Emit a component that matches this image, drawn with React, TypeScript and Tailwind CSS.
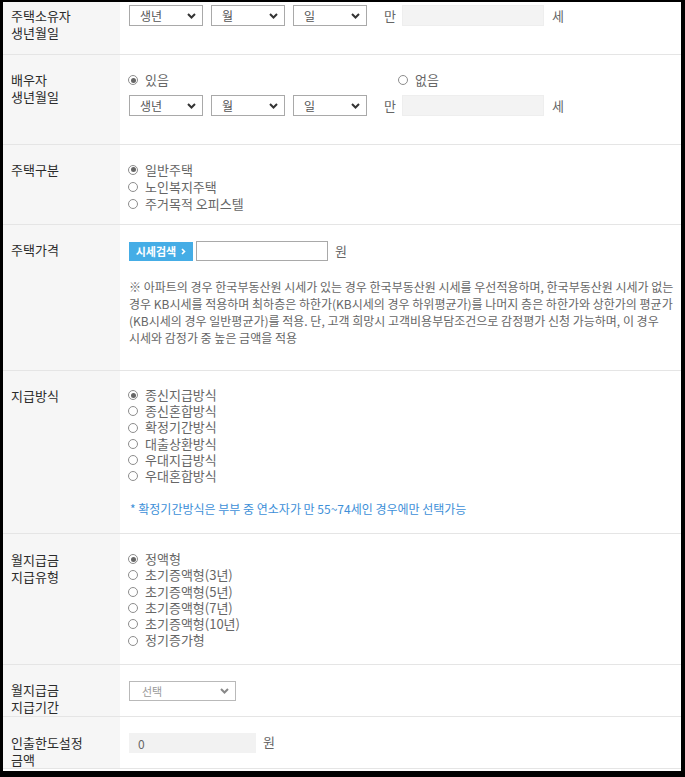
import React from 'react';

const font = "font-['Noto_Sans_CJK_KR',sans-serif]";

function Chevron({ color = '#333' }: { color?: string }) {
    return (
        <svg width="9" height="6" viewBox="0 0 9 6" fill="none">
            <path d="M1 1l3.5 3.5L8 1" stroke={color} strokeWidth="2" />
        </svg>
    );
}

function Select({ value }: { value: string }) {
    return (
        <div className="flex h-[21px] w-[74px] items-center justify-between border border-[#a9a9a9] bg-white pl-[10px] pr-[6px] text-[12px] text-[#555]">
            <span>{value}</span>
            <Chevron />
        </div>
    );
}

function Radio({ checked, label }: { checked?: boolean; label: string }) {
    return (
        <label className="flex items-center gap-[7px]">
            <span className="flex h-[10px] w-[10px] items-center justify-center rounded-full border border-[#8d8d8d] bg-white">
                {checked && <span className="h-[5px] w-[5px] rounded-full bg-[#666]" />}
            </span>
            <span>{label}</span>
        </label>
    );
}

function BirthFields() {
    return (
        <div className="flex items-center">
            <div className="flex gap-[8px]">
                <Select value="생년" />
                <Select value="월" />
                <Select value="일" />
            </div>
            <span className="ml-[17px] text-[13px] text-[#666]">만</span>
            <input
                readOnly
                className="ml-[6px] h-[21px] w-[142px] border border-[#eeeeee] bg-[#f3f3f3] outline-none"
            />
            <span className="ml-[8px] text-[13px] text-[#666]">세</span>
        </div>
    );
}

function Label({ children, className }: { children: React.ReactNode; className: string }) {
    return (
        <div className={`w-[117px] shrink-0 bg-[#f6f6f6] pl-[8px] text-[13px] leading-[17px] text-[#2b2b2b] ${className}`}>
            {children}
        </div>
    );
}

export default function App() {
    return (
        <div className={`h-[777px] w-[685px] bg-black pb-[6px] pl-[3px] pr-[4px] pt-[2px] ${font}`}>
            <div className="flex h-full flex-col overflow-hidden bg-white">
                {/* 주택소유자 생년월일 */}
                <div className="flex h-[53px] shrink-0 border-b border-[#e5e5e5]">
                    <Label className="pt-[5px]">주택소유자<br />생년월일</Label>
                    <div className="pl-[9px] pt-[3px]">
                        <BirthFields />
                    </div>
                </div>

                {/* 배우자 생년월일 */}
                <div className="flex h-[90px] shrink-0 border-b border-[#e5e5e5]">
                    <Label className="pt-[16px]">배우자<br />생년월일</Label>
                    <div className="pl-[8px] pt-[16px] text-[13px] leading-[18px] text-[#666]">
                        <div className="flex">
                            <div className="w-[270px]">
                                <Radio checked label="있음" />
                            </div>
                            <Radio label="없음" />
                        </div>
                        <div className="ml-[1px] mt-[6px]">
                            <BirthFields />
                        </div>
                    </div>
                </div>

                {/* 주택구분 */}
                <div className="flex h-[80px] shrink-0 border-b border-[#e5e5e5]">
                    <Label className="pt-[16px]">주택구분</Label>
                    <div className="pl-[8px] pt-[16px] text-[13px] leading-[17px] text-[#666]">
                        <Radio checked label="일반주택" />
                        <Radio label="노인복지주택" />
                        <Radio label="주거목적 오피스텔" />
                    </div>
                </div>

                {/* 주택가격 */}
                <div className="flex h-[146px] shrink-0 border-b border-[#e5e5e5]">
                    <Label className="pt-[16px]">주택가격</Label>
                    <div className="pl-[9px] pt-[16px]">
                        <div className="flex items-center">
                            <button className="flex h-[19px] w-[64px] items-center justify-center gap-[5px] bg-[#45ade6] text-[11px] font-bold text-white">
                                시세검색
                                <svg width="5" height="7" viewBox="0 0 5 7" fill="none">
                                    <path d="M1 1l2.5 2.5L1 6" stroke="#fff" strokeWidth="1.6" />
                                </svg>
                            </button>
                            <input
                                readOnly
                                className="ml-[3px] h-[20px] w-[132px] border border-[#a9a9a9] bg-white outline-none"
                            />
                            <span className="ml-[7px] text-[13px] text-[#666]">원</span>
                        </div>
                        <p className="mt-[17px] text-[12px] leading-[17px] text-[#666]">
                            ※ 아파트의 경우 한국부동산원 시세가 있는 경우 한국부동산원 시세를 우선적용하며, 한국부동산원 시세가 없는
                            <br />
                            경우 KB시세를 적용하며 최하층은 하한가(KB시세의 경우 하위평균가)를 나머지 층은 하한가와 상한가의 평균가
                            <br />
                            (KB시세의 경우 일반평균가)를 적용. 단, 고객 희망시 고객비용부담조건으로 감정평가 신청 가능하며, 이 경우
                            <br />
                            시세와 감정가 중 높은 금액을 적용
                        </p>
                    </div>
                </div>

                {/* 지급방식 */}
                <div className="flex h-[163px] shrink-0 border-b border-[#e5e5e5]">
                    <Label className="pt-[16px]">지급방식</Label>
                    <div className="pl-[8px] pt-[16px] text-[13px] leading-[16.2px] text-[#666]">
                        <Radio checked label="종신지급방식" />
                        <Radio label="종신혼합방식" />
                        <Radio label="확정기간방식" />
                        <Radio label="대출상환방식" />
                        <Radio label="우대지급방식" />
                        <Radio label="우대혼합방식" />
                        <p className="ml-[2px] mt-[17px] text-[12px] text-[#3d8fd8]">
                            * 확정기간방식은 부부 중 연소자가 만 55~74세인 경우에만 선택가능
                        </p>
                    </div>
                </div>

                {/* 월지급금 지급유형 */}
                <div className="flex h-[131px] shrink-0 border-b border-[#e5e5e5]">
                    <Label className="pt-[17px]">월지급금<br />지급유형</Label>
                    <div className="pl-[8px] pt-[17px] text-[13px] leading-[16.3px] text-[#666]">
                        <Radio checked label="정액형" />
                        <Radio label="초기증액형(3년)" />
                        <Radio label="초기증액형(5년)" />
                        <Radio label="초기증액형(7년)" />
                        <Radio label="초기증액형(10년)" />
                        <Radio label="정기증가형" />
                    </div>
                </div>

                {/* 월지급금 지급기간 */}
                <div className="flex h-[52px] shrink-0 border-b border-[#e5e5e5]">
                    <Label className="pt-[16px]">월지급금<br />지급기간</Label>
                    <div className="pl-[9px] pt-[16px]">
                        <div className="flex h-[20px] w-[107px] items-center justify-between border border-[#b9b9b9] bg-white pl-[12px] pr-[6px] text-[11px] text-[#999]">
                            <span>선택</span>
                            <Chevron color="#888" />
                        </div>
                    </div>
                </div>

                {/* 인출한도설정 금액 */}
                <div className="flex h-[52px] shrink-0 border-b border-[#e5e5e5]">
                    <Label className="pt-[17px]">인출한도설정<br />금액</Label>
                    <div className="flex items-start pl-[9px] pt-[16px]">
                        <input
                            readOnly
                            value="0"
                            className="h-[20px] w-[127px] bg-[#f2f2f2] pl-[9px] text-[12px] text-[#666] outline-none"
                        />
                        <span className="ml-[7px] text-[13px] leading-[18px] text-[#666]">원</span>
                    </div>
                </div>
            </div>
        </div>
    );
}
